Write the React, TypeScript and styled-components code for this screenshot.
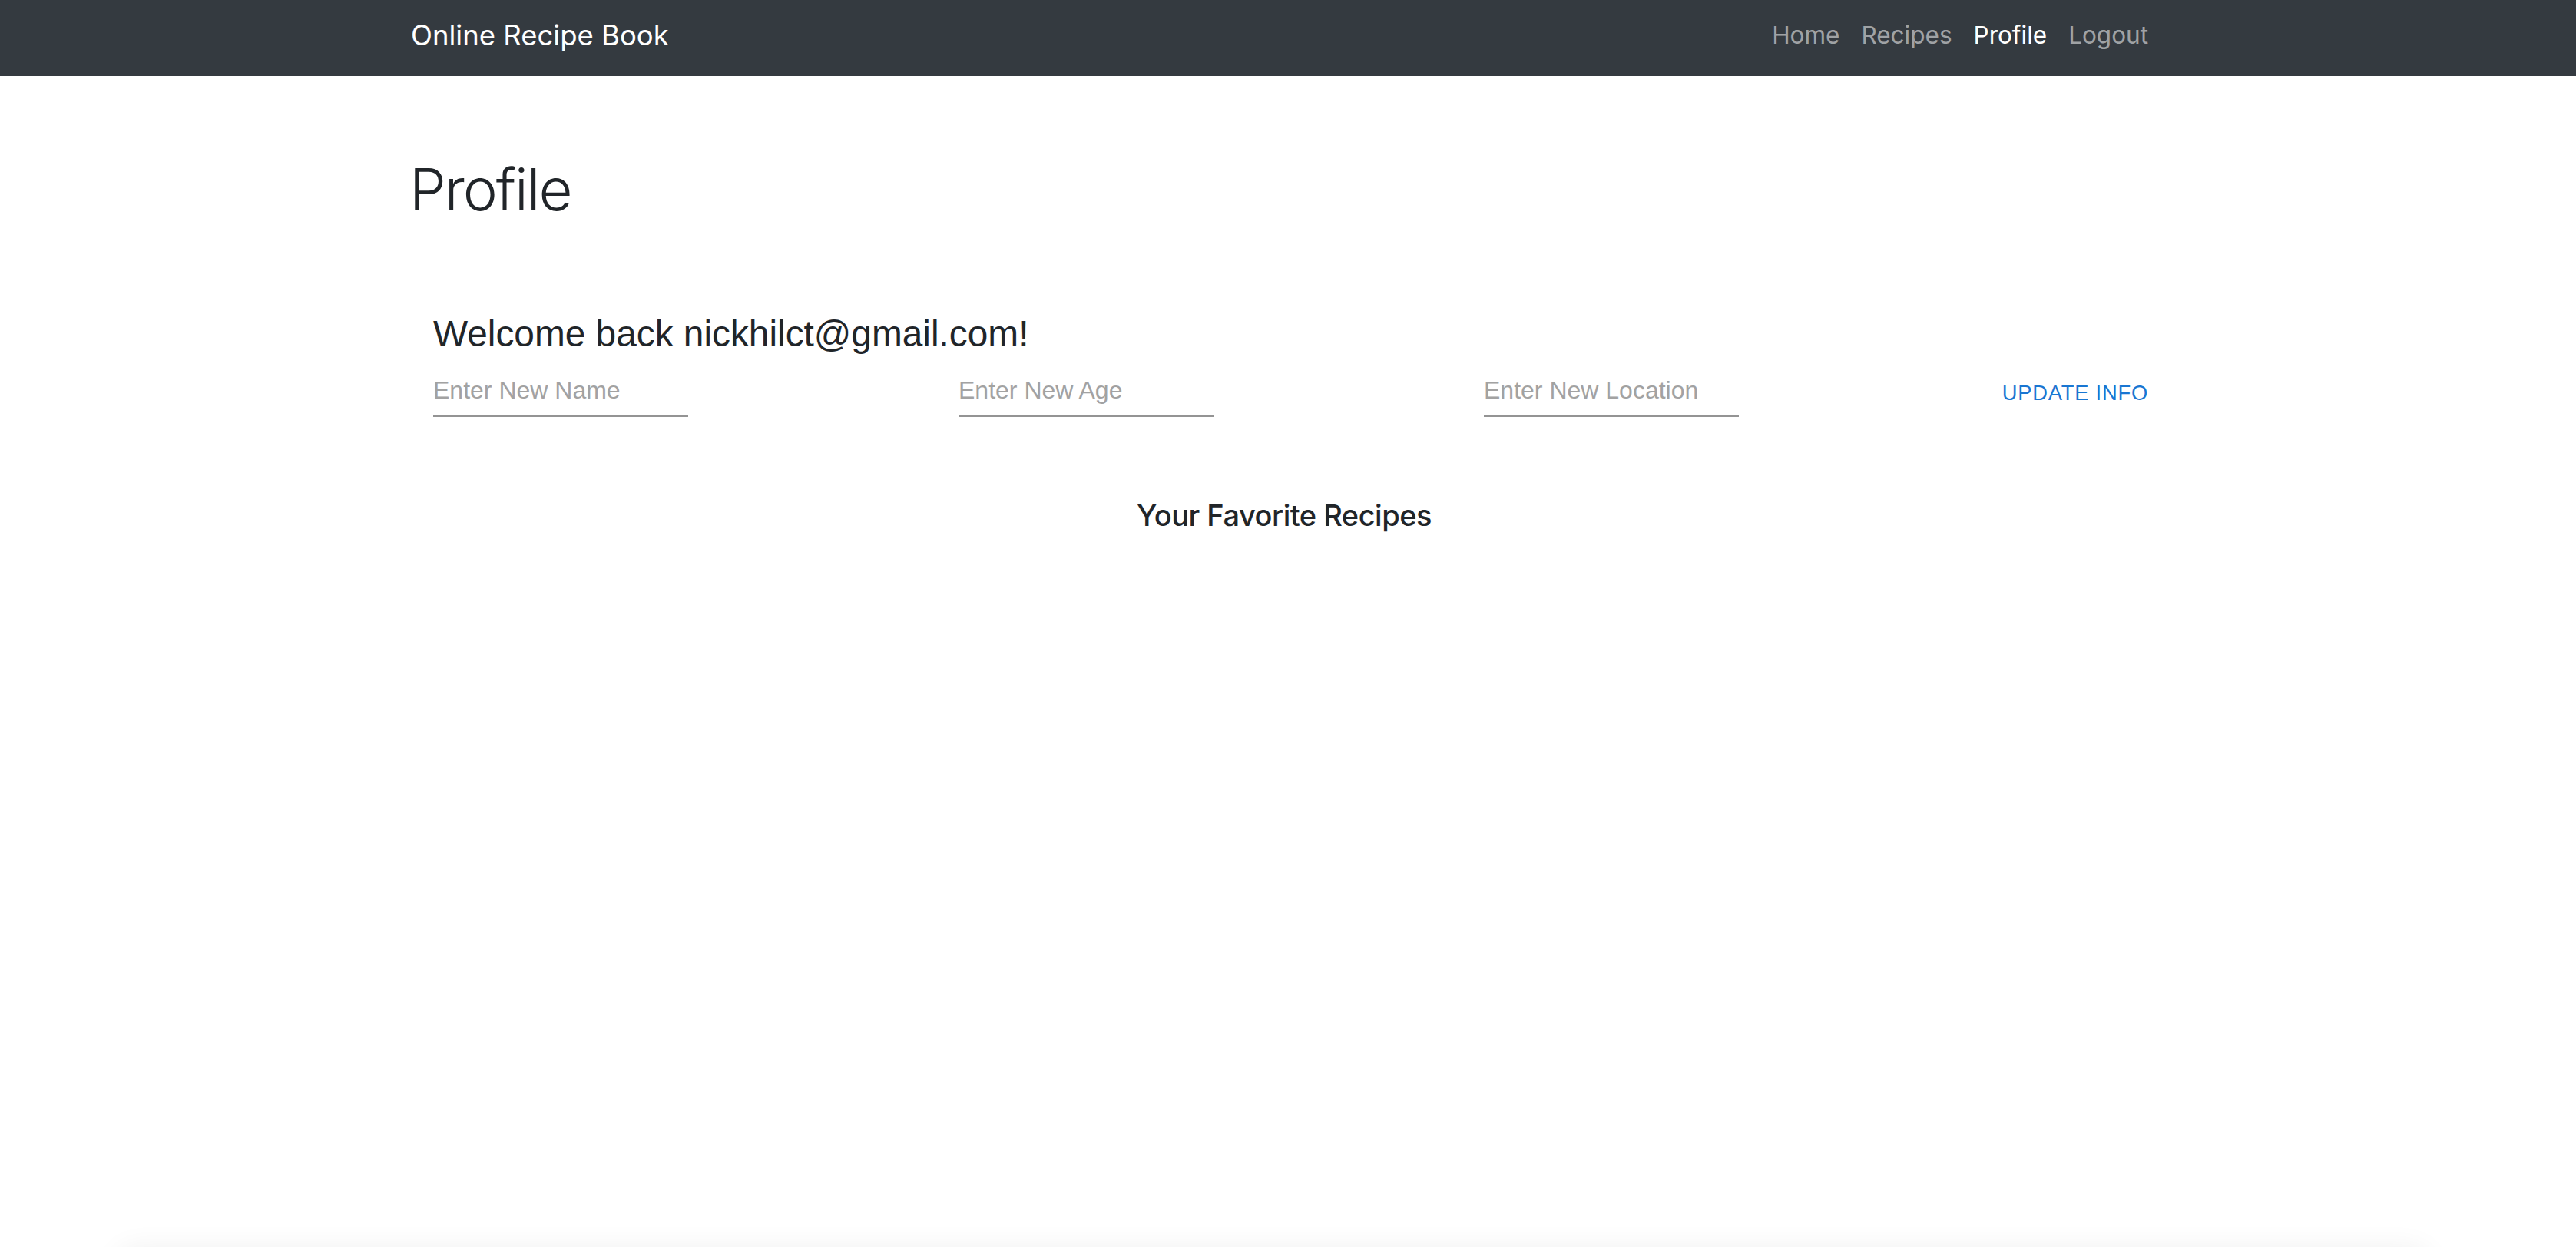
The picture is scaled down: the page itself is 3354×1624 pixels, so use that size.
import React from "react";
import styled, { createGlobalStyle } from "styled-components";

const GlobalStyle = createGlobalStyle`
  html, body {
    margin: 0;
    padding: 0;
    background: #ffffff;
  }
  body {
    font-family: Inter, "Noto Sans", sans-serif;
    color: #212529;
    overflow: hidden;
  }
  * { box-sizing: border-box; }
`;

const Page = styled.div`
  min-height: 1624px;
  display: flex;
  flex-direction: column;
`;

const NavBar = styled.nav`
  height: 99px;
  background: #343a40;
  display: flex;
  align-items: center;
`;

const NavInner = styled.div`
  flex: 1;
  margin: 0 543px 0 533px;
  display: flex;
  align-items: center;
  justify-content: space-between;
`;

const Brand = styled.a`
  font-family: Inter, sans-serif;
  font-size: 36.5px;
  line-height: 52px;
  color: #ffffff;
  text-decoration: none;
  padding-left: 2px;
  margin-top: -8px;
`;

const NavList = styled.ul`
  list-style: none;
  margin: -8px 0 0 0;
  padding: 0;
  display: flex;
`;

const NavLink = styled.a<{ $active?: boolean }>`
  display: block;
  padding: 0 14px;
  font-family: Inter, sans-serif;
  font-size: 31.5px;
  line-height: 44px;
  color: ${(p) => (p.$active ? "#ffffff" : "rgba(255,255,255,0.55)")};
  text-decoration: none;
`;

const Main = styled.main`
  margin: 0 543px 0 533px;
  display: flex;
  flex-direction: column;
`;

const Title = styled.h1`
  margin: 100px 0 0 0;
  font-family: Inter, sans-serif;
  font-size: 76px;
  font-weight: 300;
  letter-spacing: -2px;
  line-height: 94px;
`;

const WelcomeSection = styled.section`
  margin-top: 113px;
  padding: 0 14px 0 31px;
  display: flex;
  flex-direction: column;
`;

const Welcome = styled.h4`
  margin: 0;
  font-family: "Liberation Sans", Arial, sans-serif;
  font-size: 47.8px;
  font-weight: 400;
  line-height: 57px;
  color: #212529;
`;

const FormRow = styled.form`
  margin-top: 18px;
  display: flex;
  align-items: center;
`;

const FieldGroup = styled.div`
  display: flex;
  gap: 352px;
`;

const Field = styled.input`
  width: 332px;
  padding: 8px 0 14px 0;
  border: none;
  border-bottom: 2px solid #949494;
  outline: none;
  background: transparent;
  font-family: "Liberation Sans", Arial, sans-serif;
  font-size: 32px;
  line-height: 38px;
  color: #212529;
  &::placeholder {
    color: #a2a2a2;
  }
`;

const UpdateButton = styled.button`
  margin-left: auto;
  flex-shrink: 0;
  white-space: nowrap;
  padding: 8px 0;
  border: none;
  background: transparent;
  font-family: "Liberation Sans", Arial, sans-serif;
  font-size: 27.3px;
  letter-spacing: 0.8px;
  line-height: 38px;
  text-transform: uppercase;
  color: #1976d2;
  cursor: pointer;
`;

const Favorites = styled.h4`
  margin: 105px 0 0 0;
  text-align: center;
  font-family: Inter, sans-serif;
  font-size: 38px;
  font-weight: 500;
  letter-spacing: -0.5px;
  line-height: 46px;
  color: #212529;
`;

const RecipeTray = styled.div`
  margin: 930px 189px 0 150px;
  height: 400px;
  border-radius: 28px;
  background: #ffffff;
  box-shadow: 0 0 36px rgba(0, 0, 0, 0.06);
`;

export default function App() {
  return (
    <>
      <GlobalStyle />
      <Page>
        <NavBar>
          <NavInner>
            <Brand href="#">Online Recipe Book</Brand>
            <NavList>
              <li><NavLink href="#">Home</NavLink></li>
              <li><NavLink href="#">Recipes</NavLink></li>
              <li><NavLink href="#" $active>Profile</NavLink></li>
              <li><NavLink href="#">Logout</NavLink></li>
            </NavList>
          </NavInner>
        </NavBar>
        <Main>
          <Title>Profile</Title>
          <WelcomeSection>
            <Welcome>Welcome back nickhilct@gmail.com!</Welcome>
            <FormRow onSubmit={(e) => e.preventDefault()}>
              <FieldGroup>
                <Field placeholder="Enter New Name" />
                <Field placeholder="Enter New Age" />
                <Field placeholder="Enter New Location" />
              </FieldGroup>
              <UpdateButton type="submit">Update Info</UpdateButton>
            </FormRow>
          </WelcomeSection>
          <Favorites>Your Favorite Recipes</Favorites>
        </Main>
        <RecipeTray />
      </Page>
    </>
  );
}
